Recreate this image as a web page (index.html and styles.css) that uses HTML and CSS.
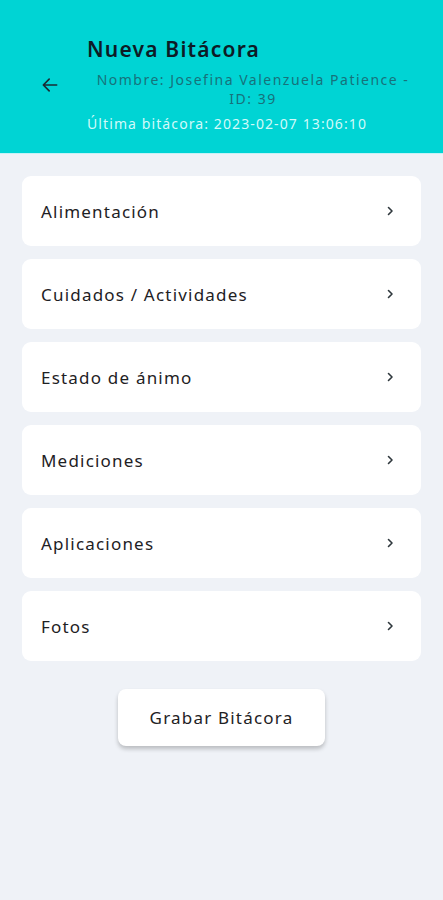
FILE: index.html
```html
<!DOCTYPE html>
<html lang="es">
<head>
<meta charset="utf-8">
<link rel="stylesheet" href="styles.css">
</head>
<body>
<header class="header">
  <button class="back" aria-label="Volver">
    <svg width="20" height="20" viewBox="0 0 24 24"><path d="M20 12H5M11 5l-7 7 7 7" fill="none" stroke="#1a2a33" stroke-width="2" stroke-linecap="round" stroke-linejoin="round"/></svg>
  </button>
  <div class="info">
    <h1 class="title">Nueva Bitácora</h1>
    <p class="name">Nombre: Josefina Valenzuela Patience - ID: 39</p>
    <p class="last">Última bitácora: 2023-02-07 13:06:10</p>
  </div>
</header>
<main class="content">
  <ul class="list">
    <li class="card"><span>Alimentación</span><svg class="chev" width="8" height="12" viewBox="0 0 8 12"><path d="M2.5 2.5l3.5 3.5-3.5 3.5" fill="none" stroke="#2f383d" stroke-width="1.6" stroke-linecap="round" stroke-linejoin="round"/></svg></li>
    <li class="card"><span>Cuidados / Actividades</span><svg class="chev" width="8" height="12" viewBox="0 0 8 12"><path d="M2.5 2.5l3.5 3.5-3.5 3.5" fill="none" stroke="#2f383d" stroke-width="1.6" stroke-linecap="round" stroke-linejoin="round"/></svg></li>
    <li class="card"><span>Estado de ánimo</span><svg class="chev" width="8" height="12" viewBox="0 0 8 12"><path d="M2.5 2.5l3.5 3.5-3.5 3.5" fill="none" stroke="#2f383d" stroke-width="1.6" stroke-linecap="round" stroke-linejoin="round"/></svg></li>
    <li class="card"><span>Mediciones</span><svg class="chev" width="8" height="12" viewBox="0 0 8 12"><path d="M2.5 2.5l3.5 3.5-3.5 3.5" fill="none" stroke="#2f383d" stroke-width="1.6" stroke-linecap="round" stroke-linejoin="round"/></svg></li>
    <li class="card"><span>Aplicaciones</span><svg class="chev" width="8" height="12" viewBox="0 0 8 12"><path d="M2.5 2.5l3.5 3.5-3.5 3.5" fill="none" stroke="#2f383d" stroke-width="1.6" stroke-linecap="round" stroke-linejoin="round"/></svg></li>
    <li class="card"><span>Fotos</span><svg class="chev" width="8" height="12" viewBox="0 0 8 12"><path d="M2.5 2.5l3.5 3.5-3.5 3.5" fill="none" stroke="#2f383d" stroke-width="1.6" stroke-linecap="round" stroke-linejoin="round"/></svg></li>
  </ul>
  <div class="actions">
    <button class="save">Grabar Bitácora</button>
  </div>
</main>
</body>
</html>
```
FILE: styles.css
```css
* { box-sizing: border-box; }
html, body { margin: 0; padding: 0; }
body {
  width: 443px;
  min-height: 900px;
  background: #eff2f7;
  font-family: "Noto Sans", "DejaVu Sans", sans-serif;
  color: #1c1f22;
}
.header {
  height: 153px;
  background: #00d4d4;
  box-shadow: 0 1px 0 #c6f2f6;
  display: flex;
  align-items: flex-start;
  padding: 35px 20px 0 40px;
}
.back {
  background: none;
  border: 0;
  padding: 0;
  margin-top: 40px;
  width: 20px;
  height: 20px;
  display: flex;
}
.info {
  margin-left: 27px;
  flex: 1;
  display: flex;
  flex-direction: column;
}
.title {
  margin: 0;
  font-size: 21px;
  font-weight: 600;
  letter-spacing: 1.2px;
  line-height: 29px;
  color: #0d1b26;
}
.name {
  margin: 6px 0 0;
  font-size: 14px;
  line-height: 19px;
  letter-spacing: 1.5px;
  text-align: center;
  color: #17727b;
  padding: 0 4px 0 0;
}
.last {
  margin: 6px 0 0;
  font-size: 14px;
  line-height: 20px;
  letter-spacing: 1.1px;
  color: #d2fafa;
}
.content {
  padding: 23px 22px 0;
}
.list {
  list-style: none;
  margin: 0;
  padding: 0;
  display: flex;
  flex-direction: column;
  gap: 13px;
}
.card {
  height: 70px;
  background: #ffffff;
  border-radius: 9px;
  display: flex;
  align-items: center;
  justify-content: space-between;
  padding: 0 27px 0 19px;
  font-size: 17px;
  letter-spacing: 1.2px;
  color: #1e2124;
}
.actions {
  display: flex;
  justify-content: center;
  margin-top: 28px;
}
.save {
  width: 207px;
  height: 57px;
  background: #ffffff;
  border: 0;
  border-radius: 8px;
  box-shadow: 0 3px 4px rgba(0,0,0,0.22);
  font-family: "Noto Sans", "DejaVu Sans", sans-serif;
  font-size: 17px;
  letter-spacing: 1.2px;
  color: #1e2124;
}
```
